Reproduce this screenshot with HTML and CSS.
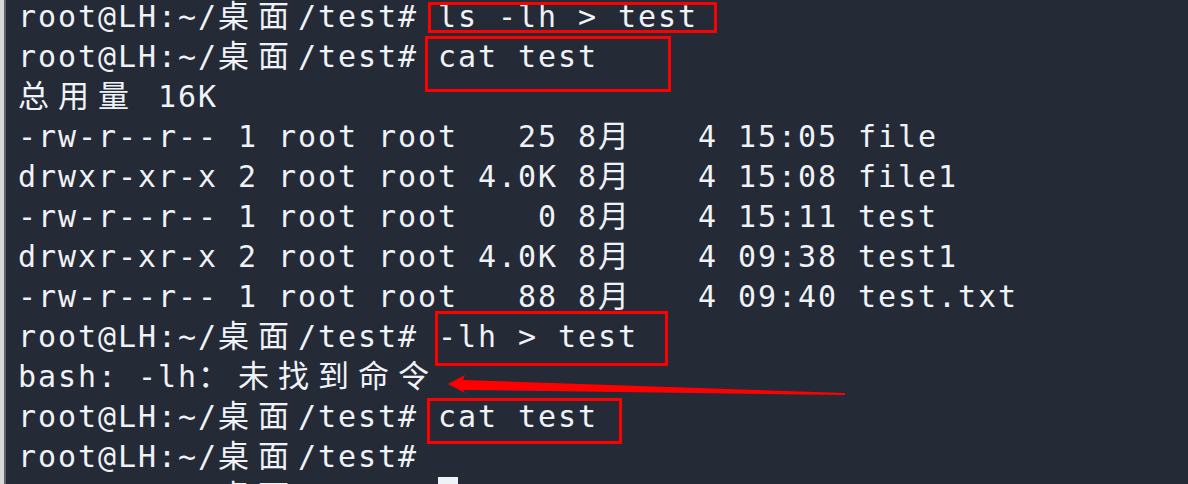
FILE: index.html
```html
<!DOCTYPE html>
<html lang="zh-CN">
<head>
<meta charset="utf-8">
<title>terminal</title>
<link rel="stylesheet" href="styles.css">
</head>
<body>
<div class="win">
  <div class="edge"></div>
  <div class="term">
    <div class="ln">root@LH:~/<span class="w">桌面</span>/test# ls -lh &gt; test</div>
    <div class="ln">root@LH:~/<span class="w">桌面</span>/test# cat test</div>
    <div class="ln"><span class="w">总用量</span> 16K</div>
    <div class="ln">-rw-r--r-- 1 root root   25 8<span class="w">月</span>   4 15:05 file</div>
    <div class="ln">drwxr-xr-x 2 root root 4.0K 8<span class="w">月</span>   4 15:08 file1</div>
    <div class="ln">-rw-r--r-- 1 root root    0 8<span class="w">月</span>   4 15:11 test</div>
    <div class="ln">drwxr-xr-x 2 root root 4.0K 8<span class="w">月</span>   4 09:38 test1</div>
    <div class="ln">-rw-r--r-- 1 root root   88 8<span class="w">月</span>   4 09:40 test.txt</div>
    <div class="ln">root@LH:~/<span class="w">桌面</span>/test# -lh &gt; test</div>
    <div class="ln">bash: -lh<span class="w">：未找到命令</span></div>
    <div class="ln">root@LH:~/<span class="w">桌面</span>/test# cat test</div>
    <div class="ln">root@LH:~/<span class="w">桌面</span>/test#</div>
    <div class="ln">root@LH:~/<span class="w">桌面</span>/test# <span class="cursor"></span></div>
  </div>
  <div class="box box1"></div>
  <div class="box box2"></div>
  <div class="box box3"></div>
  <div class="box box4"></div>
  <svg class="arrow" width="1188" height="484" viewBox="0 0 1188 484">
    <polygon points="448,384 465,375 463,380 845,393 845,395 463,390 465,393" fill="#ff0000"/>
  </svg>
</div>
</body>
</html>
```
FILE: styles.css
```css
html, body {
  margin: 0;
  padding: 0;
  width: 1188px;
  height: 484px;
  overflow: hidden;
  background: #242a36;
}

.win {
  position: relative;
  display: flex;
  width: 1188px;
  height: 484px;
  overflow: hidden;
  background: #242a36;
}

.edge {
  flex: 0 0 4px;
  background: #d7d8da;
  border-right: 2px solid #60646c;
}

.term {
  flex: 1;
  margin-top: -3px;
  padding-left: 12px;
  font-family: "DejaVu Sans Mono", monospace;
  font-size: 30px;
  letter-spacing: 1.94px;
  color: #eff2f6;
  line-height: 40px;
}

.ln {
  height: 40px;
  white-space: pre;
}

.w {
  display: inline-block;
  height: 40px;
  vertical-align: top;
  font-family: "Noto Sans CJK SC", sans-serif;
  font-size: 31px;
  letter-spacing: 9px;
  line-height: 34px;
}

.cursor {
  display: inline-block;
  width: 20px;
  height: 40px;
  vertical-align: top;
  background: #eef3f8;
}

.box {
  position: absolute;
  box-sizing: border-box;
  border: 3px solid #ff0000;
}

.box1 { left: 428px; top: 2px; width: 289px; height: 31px; }
.box2 { left: 425px; top: 36px; width: 246px; height: 56px; }
.box3 { left: 435px; top: 311px; width: 233px; height: 55px; }
.box4 { left: 427px; top: 398px; width: 195px; height: 46px; }

.arrow {
  position: absolute;
  left: 0;
  top: 0;
}
```
